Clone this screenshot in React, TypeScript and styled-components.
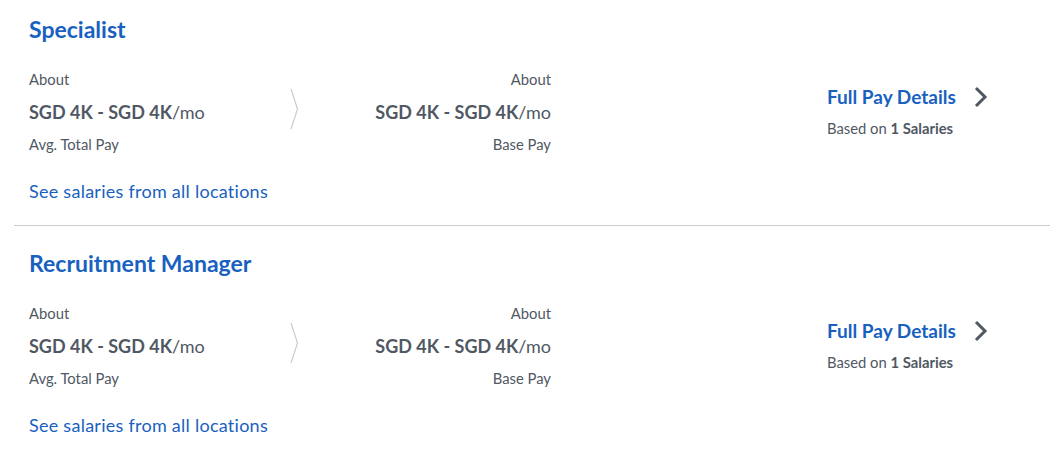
import React from 'react';
import styled, { createGlobalStyle } from 'styled-components';

const GlobalStyle = createGlobalStyle`
  body {
    margin: 0;
    background: #fff;
    font-family: Lato, "Open Sans", Arial, sans-serif;
    color: #505863;
  }
`;

const List = styled.div`
  padding: 0 13px 0 14px;
`;

const Item = styled.section`
  padding: 23px 15px 21px;
  border-bottom: 1px solid #ccc;

  &:first-child {
    padding-top: 15px;
  }

  &:last-child {
    border-bottom: none;
  }
`;

const Title = styled.a`
  display: block;
  font-size: 23px;
  line-height: 29px;
  font-weight: 700;
  color: #1861bf;
  text-decoration: none;
`;

const Row = styled.div`
  display: flex;
  align-items: flex-start;
  margin-top: 25px;
`;

const PayColumn = styled.div<{ $right?: boolean }>`
  width: ${(p) => (p.$right ? '242px' : '250px')};
  text-align: ${(p) => (p.$right ? 'right' : 'left')};
`;

const Small = styled.div`
  font-size: 14.8px;
  line-height: 20px;
  color: #505863;
`;

const Amount = styled.div`
  font-size: 18px;
  line-height: 26px;
  font-weight: 700;
  color: #505863;
  margin: 10px 0 9px;

  span {
    font-weight: 400;
  }
`;

const Divider = styled.div`
  width: 30px;
  display: flex;
  justify-content: center;
  padding-top: 19px;
`;

const Details = styled.div`
  margin-left: 276px;
  margin-top: 15px;
`;

const DetailsLink = styled.a`
  display: flex;
  align-items: center;
  gap: 17px;
  font-size: 19px;
  line-height: 26px;
  font-weight: 700;
  color: #1861bf;
  text-decoration: none;
`;

const Based = styled.div`
  font-size: 14.8px;
  line-height: 20px;
  margin-top: 8px;
  color: #505863;

  b {
    font-weight: 700;
  }
`;

const AllLocations = styled.a`
  display: block;
  margin-top: 24px;
  font-size: 18px;
  letter-spacing: 0.26px;
  line-height: 26px;
  color: #1861bf;
  text-decoration: none;
`;

const jobs = ['Specialist', 'Recruitment Manager'];

const ThinChevron = () => (
  <svg width="9" height="42" viewBox="0 0 9 42">
    <path d="M1 1 L7.5 21 L1 41" fill="none" stroke="#c9ccd1" strokeWidth="1.2" />
  </svg>
);

const BoldChevron = () => (
  <svg width="16" height="22" viewBox="0 0 16 22">
    <path d="M3 2 L12 11 L3 20" fill="none" stroke="#505863" strokeWidth="3" />
  </svg>
);

const App: React.FC = () => (
  <>
    <GlobalStyle />
    <List>
      {jobs.map((job) => (
        <Item key={job}>
          <Title href="#">{job}</Title>
          <Row>
            <PayColumn>
              <Small>About</Small>
              <Amount>
                SGD 4K - SGD 4K<span>/mo</span>
              </Amount>
              <Small>Avg. Total Pay</Small>
            </PayColumn>
            <Divider>
              <ThinChevron />
            </Divider>
            <PayColumn $right>
              <Small>About</Small>
              <Amount>
                SGD 4K - SGD 4K<span>/mo</span>
              </Amount>
              <Small>Base Pay</Small>
            </PayColumn>
            <Details>
              <DetailsLink href="#">
                Full Pay Details
                <BoldChevron />
              </DetailsLink>
              <Based>
                Based on <b>1 Salaries</b>
              </Based>
            </Details>
          </Row>
          <AllLocations href="#">See salaries from all locations</AllLocations>
        </Item>
      ))}
    </List>
  </>
);

export default App;
